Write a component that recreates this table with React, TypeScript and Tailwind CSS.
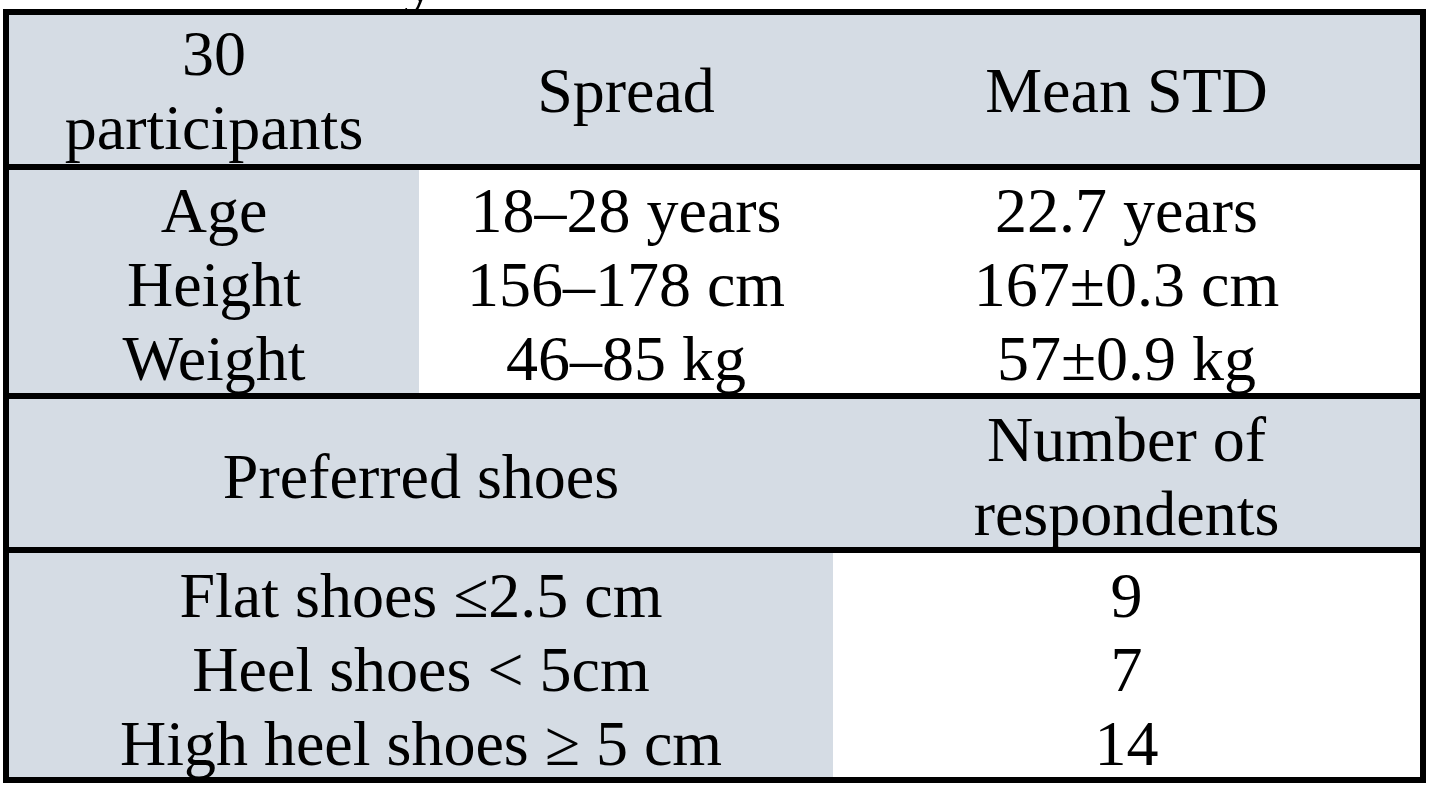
import type { ReactNode } from 'react';

type CellProps = {
  lines: ReactNode[];
  className?: string;
};

function Cell({ lines, className = '' }: CellProps) {
  return (
    <div className={`flex min-h-0 flex-col items-center justify-start text-center ${className}`}>
      {lines.map((line, i) => (
        <span key={i} className="whitespace-nowrap">
          {line}
        </span>
      ))}
    </div>
  );
}

export default function App() {
  return (
    <div className="min-h-screen bg-white text-black font-['Liberation_Serif','Times_New_Roman',serif] text-[64px] leading-[74px]">
      {/* tail of the caption line above the table */}
      <div className="h-[9px] overflow-hidden pl-[404px]">
        <span className="block -mt-[57px] leading-[74px]">y</span>
      </div>

      <div className="ml-[3px] w-[1423px] border-[6px] border-black">
        {/* header */}
        <div className="grid h-[149px] grid-cols-[410px_414px_1fr] grid-rows-1 bg-[#d5dce4]">
          <Cell className="pt-[2px]" lines={['30', 'participants']} />
          <Cell className="pt-[39px]" lines={['Spread']} />
          <Cell className="pt-[39px]" lines={['Mean STD']} />
        </div>

        {/* body measurements */}
        <div className="grid h-[229px] grid-cols-[410px_414px_1fr] grid-rows-1 border-t-[6px] border-black">
          <Cell className="bg-[#d5dce4] pt-[4px]" lines={['Age', 'Height', 'Weight']} />
          <Cell className="bg-white pt-[4px]" lines={['18–28 years', '156–178 cm', '46–85 kg']} />
          <Cell className="bg-white pt-[4px]" lines={['22.7 years', '167±0.3 cm', '57±0.9 kg']} />
        </div>

        {/* shoes header */}
        <div className="grid h-[154px] grid-cols-[824px_1fr] grid-rows-1 border-t-[6px] border-black bg-[#d5dce4]">
          <Cell className="pt-[41px]" lines={['Preferred shoes']} />
          <Cell className="pt-[4px]" lines={['Number of', 'respondents']} />
        </div>

        {/* shoes rows */}
        <div className="grid h-[230px] grid-cols-[824px_1fr] grid-rows-1 border-t-[6px] border-black">
          <Cell
            className="bg-[#d5dce4] pt-[6px]"
            lines={['Flat shoes ≤2.5 cm', 'Heel shoes < 5cm', 'High heel shoes ≥ 5 cm']}
          />
          <Cell className="bg-white pt-[6px]" lines={['9', '7', '14']} />
        </div>
      </div>
    </div>
  );
}
